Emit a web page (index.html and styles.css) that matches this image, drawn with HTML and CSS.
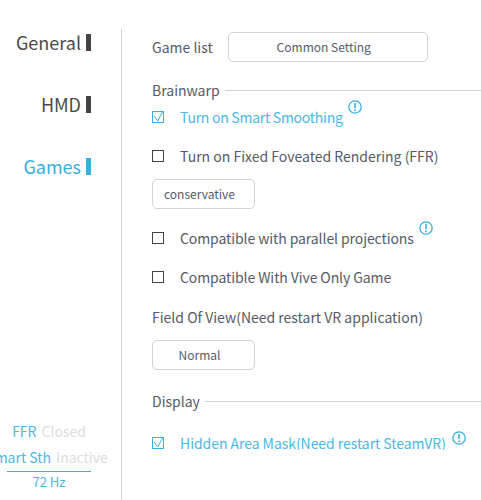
FILE: index.html
```html
<!DOCTYPE html>
<html lang="en">
<head>
    <meta charset="UTF-8">
    <title>Settings</title>
    <link rel="stylesheet" href="styles.css">
</head>
<body>
    <div class="sidebar">
        <div class="menu">
            <div class="menu-item">General<span class="bar"></span></div>
            <div class="menu-item">HMD<span class="bar"></span></div>
            <div class="menu-item aktif">Games<span class="bar"></span></div>
        </div>
        <div class="status">
            <div class="status-row"><span class="on">FFR</span><span class="off">Closed</span></div>
            <div class="status-row geser"><span class="on">Smart Sth</span><span class="off">Inactive</span></div>
            <div class="hz">72 Hz</div>
        </div>
    </div>
    <div class="content">
        <div class="game-list">
            <span>Game list</span>
            <div class="tombol lebar">Common Setting</div>
        </div>

        <div class="judul judul-1">Brainwarp</div>
        <div class="cek aktif baris-1">
            <svg class="kotak" viewBox="0 0 12 12"><rect x="0.5" y="0.5" width="11" height="11"/><path d="M2 5 L5.8 10 L10.5 1"/></svg>
            <span class="rapat">Turn on Smart Smoothing</span>
            <svg class="info" viewBox="0 0 14 14"><circle cx="7" cy="7" r="6.2"/><path class="tanda" d="M7 3 V8.2 M7 9.6 V11"/></svg>
        </div>
        <div class="cek">
            <svg class="kotak" viewBox="0 0 12 12"><rect x="0.5" y="0.5" width="11" height="11"/></svg>
            <span>Turn on Fixed Foveated Rendering (FFR)</span>
        </div>
        <div class="tombol pilih kiri">conservative</div>
        <div class="cek">
            <svg class="kotak" viewBox="0 0 12 12"><rect x="0.5" y="0.5" width="11" height="11"/></svg>
            <span class="agak-rapat">Compatible with parallel projections</span>
            <svg class="info" viewBox="0 0 14 14"><circle cx="7" cy="7" r="6.2"/><path class="tanda" d="M7 3 V8.2 M7 9.6 V11"/></svg>
        </div>
        <div class="cek">
            <svg class="kotak" viewBox="0 0 12 12"><rect x="0.5" y="0.5" width="11" height="11"/></svg>
            <span class="agak-rapat">Compatible With Vive Only Game</span>
        </div>
        <div class="label">Field Of View(Need restart VR application)</div>
        <div class="tombol pilih">Normal</div>

        <div class="judul judul-2">Display</div>
        <div class="cek aktif baris-2">
            <svg class="kotak" viewBox="0 0 12 12"><rect x="0.5" y="0.5" width="11" height="11"/><path d="M2 5 L5.8 10 L10.5 1"/></svg>
            <span class="sedikit-rapat">Hidden Area Mask(Need restart SteamVR)</span>
            <svg class="info info-bawah" viewBox="0 0 14 14"><circle cx="7" cy="7" r="6.2"/><path class="tanda" d="M7 3 V8.2 M7 9.6 V11"/></svg>
        </div>
    </div>
</body>
</html>
```

FILE: styles.css
```css
html, body {
    margin: 0;
    height: 500px;
    overflow: hidden;
}

body {
    display: flex;
    font-family: "Noto Sans CJK SC", "Noto Sans", sans-serif;
    color: #555b66;
    background: #fff;
}

.sidebar {
    width: 91px;
    padding-right: 30px;
    margin-top: 29px;
    border-right: 1px solid #d2d2d2;
    display: flex;
    flex-direction: column;
    justify-content: space-between;
}

.menu {
    display: flex;
    flex-direction: column;
    gap: 38px;
    padding-top: 1px;
}

.menu-item {
    display: flex;
    justify-content: flex-end;
    align-items: center;
    height: 24px;
    font-size: 18px;
    line-height: 26px;
    color: #4a4a4a;
    white-space: nowrap;
}

.menu-item .bar {
    width: 5px;
    height: 17px;
    margin-left: 5px;
    background: #444;
}

.menu-item.aktif {
    color: #36b0de;
}

.menu-item.aktif .bar {
    background: #36b0de;
}

.status {
    margin-left: 7px;
    padding-bottom: 7px;
    font-size: 14px;
}

.status-row {
    display: flex;
    justify-content: center;
    gap: 5px;
    height: 26px;
    line-height: 24px;
    white-space: nowrap;
}

.status-row.geser {
    padding-right: 4px;
}

.status-row .on {
    color: #4bb8e4;
}

.status-row .off {
    color: #dcdcdc;
}

.hz {
    border-top: 1px solid #36b0de;
    height: 21px;
    line-height: 19px;
    font-size: 13px;
    text-align: center;
    color: #4bb8e4;
}

.content {
    flex: 1;
    min-width: 0;
    height: 450px;
    overflow: hidden;
    padding-left: 30px;
    font-size: 14px;
}

.game-list {
    display: flex;
    align-items: center;
    gap: 15px;
    margin-top: 32px;
}

.tombol {
    box-sizing: border-box;
    height: 30px;
    line-height: 28px;
    border: 1px solid #d2d2d2;
    border-radius: 5px;
    font-size: 12px;
    text-align: center;
}

.tombol.lebar {
    width: 200px;
    padding-right: 8px;
}

.tombol.pilih {
    width: 103px;
    padding-right: 8px;
    margin-top: 4px;
}

.tombol.kiri {
    margin-bottom: 9px;
    padding: 0 0 0 11px;
    text-align: left;
}

.judul {
    display: flex;
    align-items: center;
    gap: 5px;
    height: 20px;
    line-height: 20px;
}

.judul::after {
    content: "";
    flex: 1;
    border-top: 1px solid #d2d2d2;
    margin-right: -8px;
}

.judul-1 {
    margin-top: 18px;
}

.judul-2 {
    margin-top: 21px;
}

.cek {
    display: flex;
    align-items: center;
    height: 39px;
    white-space: nowrap;
}

.cek .kotak {
    width: 12px;
    height: 12px;
    margin-right: 16px;
    flex: none;
}

.rapat {
    letter-spacing: -0.26px;
}

.agak-rapat {
    letter-spacing: -0.09px;
}

.sedikit-rapat {
    letter-spacing: -0.05px;
}

.kotak rect, .kotak path, .info circle, .info path {
    fill: none;
    stroke: currentColor;
    stroke-width: 1;
}

.kotak {
    color: #444;
}

.cek.aktif, .cek.aktif .kotak {
    color: #36b0de;
}

.cek.aktif span {
    color: #4bb8e4;
}

.info {
    width: 14px;
    height: 14px;
    margin-left: 5px;
    margin-top: -20px;
    color: #36b0de;
}

.info circle {
    stroke-width: 1.3;
}

.info .tanda {
    stroke-width: 1.6;
}

.info-bawah {
    margin-left: 6px;
    margin-top: -9px;
}

.baris-1 {
    margin-top: -3px;
}

.baris-2 {
    margin-top: 12px;
}

.label {
    height: 39px;
    margin-top: 1px;
    line-height: 41px;
}
```
